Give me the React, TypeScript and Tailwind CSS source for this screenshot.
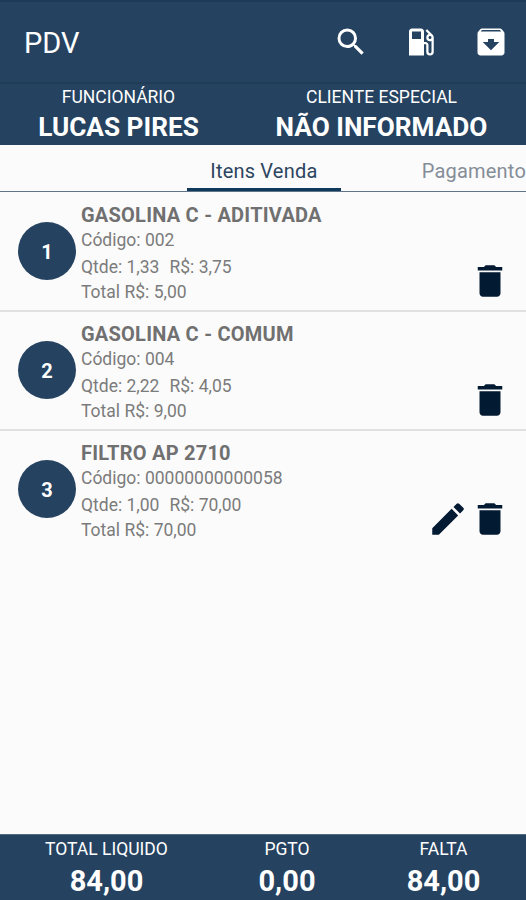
import { MdArchive, MdDelete, MdEdit, MdLocalGasStation, MdSearch } from "react-icons/md";

const items = [
  { id: 1, name: "GASOLINA C - ADITIVADA", code: "002", qty: "1,33", price: "3,75", total: "5,00", editable: false },
  { id: 2, name: "GASOLINA C - COMUM", code: "004", qty: "2,22", price: "4,05", total: "9,00", editable: false },
  { id: 3, name: "FILTRO AP 2710", code: "00000000000058", qty: "1,00", price: "70,00", total: "70,00", editable: true },
];

const totals = [
  { label: "TOTAL LIQUIDO", value: "84,00", width: "w-[213px]" },
  { label: "PGTO", value: "0,00", width: "w-[148px]" },
  { label: "FALTA", value: "84,00", width: "w-[165px]" },
];

function ItemRow({ item }) {
  return (
    <li className="flex h-[119px] border-b-2 border-[#e1e1e1] pl-[18px] last:border-transparent">
      <div className="mt-[29px] flex size-[58px] shrink-0 items-center justify-center rounded-full bg-[#254361] pt-[2px] text-xl font-bold text-white">
        {item.id}
      </div>
      <div className="ml-[5px] flex-1 whitespace-nowrap pt-[9px] text-[17.5px] leading-[25px] text-[#7b7b7b]">
        <h2 className="text-[20px] font-bold leading-[26px] tracking-[0.23px] text-[#707070]">{item.name}</h2>
        <p>Código: {item.code}</p>
        <p className="mt-[2px]">
          Qtde: {item.qty}
          <span className="ml-[10px]">R$: {item.price}</span>
        </p>
        <p>Total R$: {item.total}</p>
      </div>
      <div className="flex items-end pb-[8px] pr-[15px] text-[42px] text-[#031a33]">
        {item.editable && <MdEdit />}
        <MdDelete />
      </div>
    </li>
  );
}

export default function App() {
  return (
    <div className="flex h-[900px] w-[526px] flex-col overflow-hidden bg-[#fbfbfb] font-[Roboto,sans-serif]">
      <header className="flex h-[84px] shrink-0 items-center border-b-2 border-t-2 border-b-[#213c57] border-t-[#1e3a57] bg-[#254361] pl-6 pr-[17px] text-white">
        <h1 className="flex-1 pt-[3px] text-[29px]">PDV</h1>
        <div className="flex items-center gap-[34px]">
          <MdSearch className="size-9" />
          <MdLocalGasStation className="size-9" />
          <MdArchive className="size-9" />
        </div>
      </header>

      <section className="flex h-[61px] shrink-0 bg-[#254361] text-center text-white">
        <div className="w-[237px]">
          <p className="pt-px text-[17.5px] leading-[24px]">FUNCIONÁRIO</p>
          <p className="pt-[2px] text-[26.2px] font-bold leading-[32px]">LUCAS PIRES</p>
        </div>
        <div className="w-[289px]">
          <p className="pt-px text-[17.5px] leading-[24px]">CLIENTE ESPECIAL</p>
          <p className="pt-[2px] text-[26.2px] font-bold leading-[32px]">NÃO INFORMADO</p>
        </div>
      </section>

      <nav className="flex h-[47px] shrink-0 overflow-hidden whitespace-nowrap pl-[187px] text-[20px] tracking-[0.2px] shadow-[inset_0_-1px_0_#5f7389]">
        <div className="h-[46px] w-[154px] border-b-[3px] border-[#0f3a5b] pt-[11px] text-center text-[#2d4560]">
          Itens Venda
        </div>
        <div className="ml-[81px] pt-[11px] text-[#858d98]">Pagamento</div>
      </nav>

      <ul className="flex-1 pt-px">
        {items.map((item) => (
          <ItemRow key={item.id} item={item} />
        ))}
      </ul>

      <footer className="flex h-[66px] shrink-0 border-t border-[#536a80] bg-[#254361] text-center text-white">
        {totals.map((total) => (
          <div key={total.label} className={total.width}>
            <p className="pt-[2px] text-[17.5px] leading-[24px]">{total.label}</p>
            <p className="pt-[3px] text-[29px] font-bold leading-[34px]">{total.value}</p>
          </div>
        ))}
      </footer>
    </div>
  );
}
